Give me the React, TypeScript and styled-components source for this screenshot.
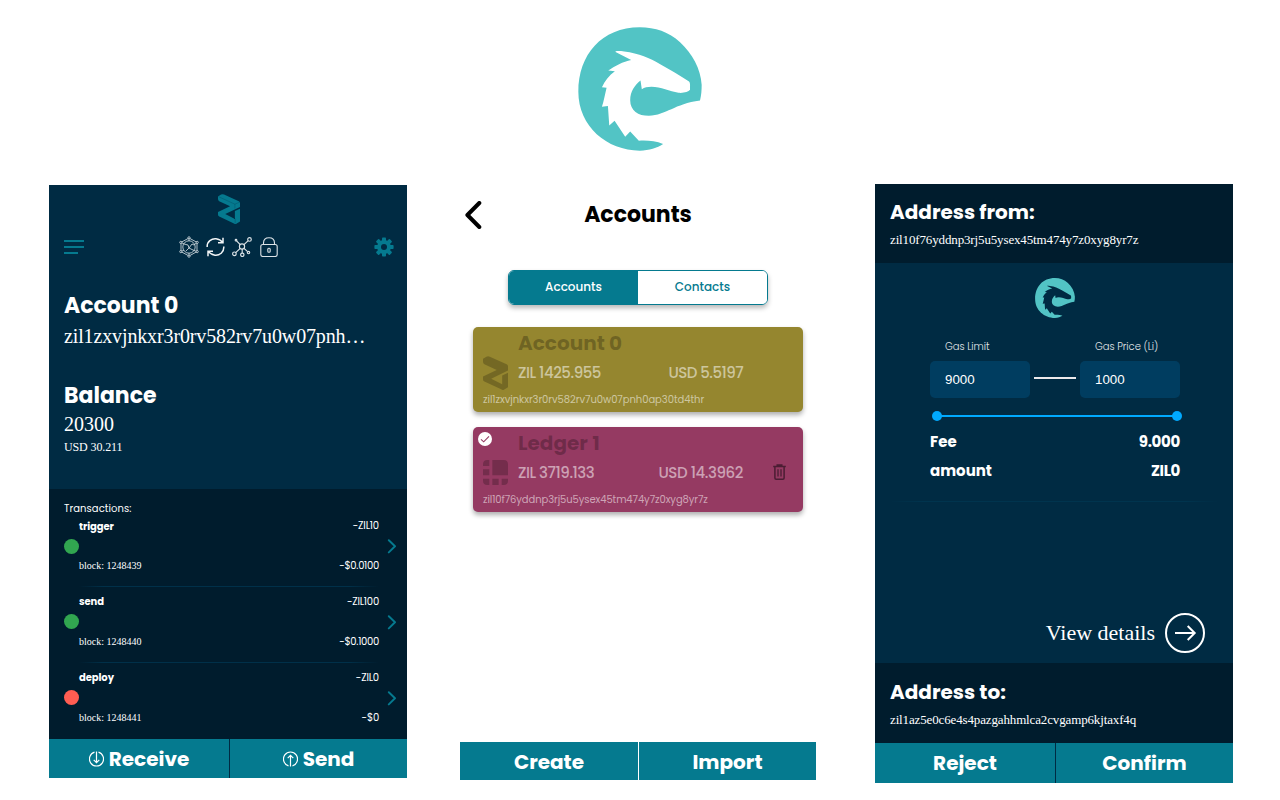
import React from 'react';
import styled, { createGlobalStyle, css } from 'styled-components';

const navy = '#002b43';
const deep = '#001c2d';
const teal = '#057a8f';

const GlobalStyle = createGlobalStyle`
  *, *::before, *::after { box-sizing: border-box; }
  body {
    margin: 0;
    background: #fff;
    overflow: hidden;
    font-family: Poppins, Inter, sans-serif;
  }
  h1, h2, p { margin: 0; font-weight: inherit; }
  svg { display: block; }
`;

const serif = css`font-family: "Liberation Serif", "Times New Roman", serif;`;

interface Tracked { $track?: number }
const tracking = css<Tracked>`letter-spacing: ${p => p.$track ?? 0}px;`;

/* Page */
const Page = styled.main`width: 1280px; height: 800px; overflow: hidden; white-space: nowrap;`;
const Hero = styled.header`
  display: flex; justify-content: center;
  height: 184px; padding-top: 27px;
`;
const Showcase = styled.div`display: flex; align-items: flex-start; padding-left: 49px;`;

/* Bottom action bar shared by the three screens */
const Actions = styled.div<{ $h: number; $gap: string; $first: number }>`
  display: grid;
  grid-template-columns: ${p => p.$first}px 1fr;
  column-gap: 1px;
  width: 100%; height: ${p => p.$h}px;
  background: ${p => p.$gap};
`;
const Action = styled.button<{ $drop?: number }>`
  display: flex; align-items: center; justify-content: center; gap: 5px;
  border: 0; padding: ${p => p.$drop ?? 0}px 0 0;
  background: ${teal};
  color: #fff;
  font: 700 20px/30px Poppins, Inter, sans-serif;
`;

/* Wallet */
const Wallet = styled.section`
  width: 358px; height: 593px; margin-top: 1px;
  background: ${navy}; color: #fff;
`;
const WalletTop = styled.div`height: 304px; padding: 9px 0 0 15px;`;
const Brand = styled.div`
  display: flex; justify-content: center;
  height: 43px; padding-right: 13px; color: ${teal};
`;
const Toolbar = styled.div`
  display: flex; justify-content: space-between; align-items: center;
  height: 20px; padding-right: 13px;
`;
const StatusIcons = styled.div`display: flex; align-items: center; gap: 7px; padding-right: 2px;`;
const WalletTitle = styled.h2<{ $top: number }>`
  margin-top: ${p => p.$top}px;
  font-size: 22px; line-height: 32px; font-weight: 700;
`;
const WalletAddress = styled.p`${serif} font-size: 20px; line-height: 28px; letter-spacing: -.13px;`;
const BalanceValue = styled.p`${serif} font-size: 20px; line-height: 24px;`;
const BalanceFiat = styled.p`${serif} font-size: 12px; line-height: 22px; letter-spacing: -.12px;`;

const History = styled.div`height: 250px; background: ${deep}; padding: 11px 11px 0 15px;`;
const HistoryTitle = styled.p`height: 16px; font-size: 10px; line-height: 18px; letter-spacing: .07px;`;
const Tx = styled.div`
  display: grid; grid-template-columns: 15px 300px 1fr; align-items: center;
  height: 60px;
`;
const Dot = styled.span<{ $c: string; $nudge: number }>`
  width: 15px; height: 15px; margin-top: ${p => p.$nudge}px;
  border-radius: 50%; background: ${p => p.$c};
`;
const TxBody = styled.div`display: flex; flex-direction: column; justify-content: space-between; height: 56px;`;
const TxLine = styled.div`display: flex; justify-content: space-between; height: 16px; font-size: 10px; line-height: 16px;`;
const TxName = styled.span<{ $lh: number }>`font-weight: 700; line-height: ${p => p.$lh}px; letter-spacing: -.08px;`;
const TxAmount = styled.span<Tracked>`${tracking}`;
const TxBlock = styled.span`${serif}`;
const TxArrow = styled.div`display: flex; justify-content: flex-end;`;
const TxRule = styled.div`
  width: 300px; height: 1px; margin: 10px 0 5px 15px;
  background: linear-gradient(90deg, transparent, #003049 8%, #003049 90%, transparent);
`;

/* Accounts */
const Accounts = styled.section`
  display: flex; flex-direction: column; align-items: center;
  width: 356px; height: 596px; margin-left: 53px;
`;
const AccountsHead = styled.div`
  display: grid; grid-template-columns: 60px 236px 60px; align-items: center;
  width: 356px; height: 62px;
`;
const BackButton = styled.div`padding-left: 5px;`;
const AccountsTitle = styled.h2`
  margin-top: -1px;
  color: #000; font-size: 22px; line-height: 32px; font-weight: 700; text-align: center;
`;
const Tabs = styled.div`
  display: grid; grid-template-columns: 129px 129px;
  width: 260px; height: 35px; margin-top: 24px;
  border: 1px solid ${teal}; border-radius: 6px;
  overflow: hidden;
  box-shadow: 0 3px 5px rgba(0, 0, 0, .28);
`;
const Tab = styled.div<{ $on?: boolean }>`
  background: ${p => (p.$on ? teal : '#fff')};
  color: ${p => (p.$on ? '#fff' : teal)};
  font-size: 12px; font-weight: 500; line-height: 31px; text-align: center;
`;
const Cards = styled.div`display: grid; gap: 15px; margin: 22px 0 auto;`;
const Card = styled.article<{ $c: string }>`
  position: relative;
  width: 330px; height: 85px; padding: 0 10px;
  border-radius: 5px;
  background: ${p => p.$c};
  box-shadow: 0 3px 5px rgba(0, 0, 0, .32);
`;
const CardGrid = styled.div`
  display: grid; grid-template-columns: 35px 225px 1fr; grid-template-rows: 31px 33px;
  height: 64px;
`;
const CardName = styled.h2`
  grid-column: 2 / 4;
  font-size: 20px; font-weight: 700; line-height: 33px;
  color: rgba(0, 0, 0, .26);
`;
const CardIcon = styled.div`grid-column: 1; align-self: center; margin-top: -4px; color: rgba(0, 0, 0, .22);`;
const CardMoney = styled.div`
  display: flex; justify-content: space-between;
  color: rgba(255, 255, 255, .53);
  font-size: 15px; font-weight: 500; line-height: 30px;
`;
const Money = styled.span<Tracked>`${tracking}`;
const CardTrash = styled.div`display: flex; justify-content: flex-end; padding: 6px 7px 0 0;`;
const CardAddress = styled.p<Tracked>`
  font-size: 10px; line-height: 17px; color: rgba(255, 255, 255, .55);
  ${tracking}
`;
const Selected = styled.span`position: absolute; left: 5px; top: 5px;`;

/* Confirm transaction */
const Confirm = styled.section`
  width: 358px; height: 599px; margin-left: 59px;
  background: ${navy}; color: #fff;
`;
const Party = styled.div<{ $h: number; $top: number }>`
  height: ${p => p.$h}px; padding: ${p => p.$top}px 15px 0;
  background: ${deep};
`;
const PartyTitle = styled.h2`font-size: 20px; line-height: 28px; font-weight: 700;`;
const PartyAddress = styled.p`${serif} font-size: 13px; line-height: 28px; letter-spacing: -.14px;`;
const Details = styled.div`height: 400px; padding-top: 15px;`;
const DetailsLogo = styled.div`display: flex; justify-content: center; padding-left: 2px;`;
const Gas = styled.div`
  display: grid; grid-template-columns: 100px 50px 100px; align-items: center; justify-items: center;
  width: 250px; margin: 20px 0 0 55px;
`;
const GasLabel = styled.span`
  justify-self: start; padding-left: 15px;
  font-size: 10px; font-weight: 300; line-height: 18px; height: 23px; color: #e4e8ea;
  letter-spacing: -.05px;
`;
const GasField = styled.div`
  width: 100px; height: 37px; padding-left: 15px;
  border-radius: 5px; background: #003d60;
  font: 13.33px/37px "Liberation Sans", Arial, sans-serif;
`;
const GasLink = styled.span`width: 42px; height: 2px; margin-top: -3px; background: #ece9ea;`;
const Slider = styled.div`
  display: flex; align-items: center; justify-content: space-between;
  width: 250px; height: 10px; margin: 13px 0 0 57px;
  background: linear-gradient(#00aaff, #00aaff) center / 240px 2px no-repeat;
`;
const Knob = styled.span`width: 10px; height: 10px; border-radius: 50%; background: #0af;`;
const Totals = styled.div`width: 250px; margin: 6px 0 0 55px;`;
const Total = styled.div`
  display: flex; justify-content: space-between;
  font-size: 15px; font-weight: 700; line-height: 29px;
`;
const TotalValue = styled.span`letter-spacing: -.3px;`;
const Rule = styled.div`
  height: 1px; margin: 16px 15px 0;
  background: linear-gradient(90deg, transparent, #00344e 10%, #00344e 90%, transparent);
`;
const ViewDetails = styled.div`
  ${serif}
  display: flex; align-items: center; justify-content: flex-end; gap: 10px;
  height: 40px; margin: 111px 28px 0 0;
  font-size: 22px;
`;

const Dragon = ({ size }: { size: number }) => (
  <svg width={size} height={size} viewBox="54 51 373 373" fill="#52c4c5">
    <path d="M421 272C425 257 426 242 426 225C423 176 398 132 361 97C327 66 286 52 240 52C125 52 55 135 55 246C55 350 141 423 240 423C268 422 292 415 310 403C287 393 262 392 237 393L211 365L196 381L164 333L148 347L144 289L126 291C132 273 135 254 140 234L126 232C134 214 148 196 165 184L145 182C164 168 190 155 214 150L167 126C164 122 182 123 193 125C238 130 270 146 300 162C330 178 360 197 388 215Q391 218 391 225V240C386 247 373 250 356 249C330 245 303 231 275 231C263 231 254 233 246 238L242 212C225 226 211 245 211 271C211 302 235 318 267 318C320 316 344 282 421 272Z" />
  </svg>
);

const Zil = ({ w, h, lines }: { w: number; h: number; lines?: boolean }) => (
  <svg width={w} height={h} viewBox="0 0 73 100" preserveAspectRatio="none" fill="currentColor">
    <path d="M10 2Q15-1 20 2L69 24Q73 26 73 30V43L24 67L56 83V57L73 49V92L61 99Q57 101 53 98L4 75Q0 73 0 69V60L40 41L4 24Q0 22 0 17V8Z" />
    {lines && <path d="M2 9L56 34L72 27M56 34V48M57 82V98" fill="none" stroke={navy} strokeOpacity=".4" strokeWidth="2" />}
  </svg>
);

const Menu = () => (
  <svg width="20" height="16" stroke={teal} strokeWidth="2">
    <path d="M0 2H20M0 8H20M0 14H14" />
  </svg>
);

const Gear = () => (
  <svg width="20" height="20" viewBox="-10 -10 20 20" fill={teal}>
    {[0, 45, 90, 135].map(a => <rect key={a} x="-2" y="-9.6" width="4" height="19.2" rx=".8" transform={`rotate(${a})`} />)}
    <circle r="6.9" />
    <circle r="3" fill={navy} />
  </svg>
);

const Hexagon = () => (
  <svg width="20" height="22" viewBox="0 0 20 22" fill="none" stroke="#dde4e8" strokeWidth=".8">
    <path d="M10 2L18 6.4V15.6L10 20L2 15.6V6.4Z" />
    <circle cx="10" cy="11" r="6.2" />
    <path d="M5 8L9 9L10 12L13 8L15 9M7 15L10 12L14 14M10 2V5M10 17V20M2 6.4L5 8M18 6.4L15 9M2 15.6L5 14M18 15.6L14 14" />
    <g fill={navy}>
      <circle cx="10" cy="1.8" r="1.1" /><circle cx="18.2" cy="6.4" r="1.1" /><circle cx="18.2" cy="15.6" r="1.1" />
      <circle cx="10" cy="20.2" r="1.1" /><circle cx="1.8" cy="15.6" r="1.1" /><circle cx="1.8" cy="6.4" r="1.1" />
    </g>
  </svg>
);

const Refresh = () => (
  <svg width="19" height="20" viewBox="0 0 19 20" fill="none" stroke="#f2f5f6" strokeWidth="1.5">
    <path d="M1.2 10C.8 4.2 5.8 1.4 10 1.8C13 2.1 15.2 3.6 16.8 5.6M17 .8V5.8H12M17.8 9.5C18.2 15.6 13.4 18.6 9 18.2C6 17.9 3.8 16.4 2.2 14.4M2 19.2V14.2H7" />
  </svg>
);

const Network = () => (
  <svg width="21" height="20" viewBox="0 0 21 20" fill="none" stroke="#dde4e8" strokeWidth="1.15">
    <circle cx="10" cy="9.5" r="2.6" /><circle cx="17.5" cy="2.4" r="1.8" /><circle cx="2.4" cy="16.8" r="1.8" />
    <circle cx="10.3" cy="17.8" r="1.7" /><circle cx="16.5" cy="15.5" r="1.2" /><circle cx="4" cy="3.2" r=".8" />
    <path d="M12 7.6L16.2 3.7M8.2 11.4L3.7 15.6M10.2 12.1V16.1M12 11.4L15.6 14.7M8.2 7.6L4.6 3.8" />
  </svg>
);

const Lock = () => (
  <svg width="18" height="20" viewBox="0 0 18 20" fill="none" stroke="#dde4e8" strokeWidth="1.1">
    <rect x=".8" y="7.5" width="16.4" height="12" rx="2" />
    <path d="M3.5 7.5V6C3.5 2.5 6 .7 9 .7S14.5 2.5 14.5 6V7.5" />
    <rect x="7.8" y="11.3" width="2.4" height="4" rx="1" />
  </svg>
);

const Chevron = () => (
  <svg width="9" height="15" fill="none" stroke={teal} strokeWidth="1.9" strokeLinecap="round" strokeLinejoin="round">
    <path d="M1.8 1.2L8 7.3L1.8 13.4" />
  </svg>
);

const CircleArrow = ({ up }: { up?: boolean }) => (
  <svg width="15" height="16" viewBox="0.5 0 15 16" fill="none" stroke="#fff" strokeWidth="1.2">
    {up
      ? <path d="M6 14.9A7 7.1 0 1 1 10 14.9M8 15.4V4.4M5.2 7.1L8 4.3L10.8 7.1" />
      : <path d="M6 1.1A7 7.1 0 1 0 10 1.1M8 .6V11.6M5.2 8.9L8 11.7L10.8 8.9" />}
  </svg>
);

const Back = () => (
  <svg width="17" height="29" fill="none" stroke="#000" strokeWidth="4" strokeLinecap="round" strokeLinejoin="round">
    <path d="M14.3 2L2.4 14L14.3 26" />
  </svg>
);

const Ledger = () => (
  <svg width="25" height="25" viewBox="0 0 75 75" fill="currentColor">
    <path d="M28 0H62Q75 0 75 13V46H28ZM0 28H19V46H0ZM28 56H47V75H28ZM19 0V18H0V13Q0 0 13 0ZM0 56H19V75H13Q0 75 0 62ZM56 56H75V62Q75 75 62 75H56Z" />
  </svg>
);

const Trash = () => (
  <svg width="13" height="17" viewBox="0 0 13 17" fill="none" stroke="#4b1d33" strokeWidth="1.5">
    <path d="M.2 2.5H12.8M4.2 2V.9H8.8V2M1.9 2.5V14Q1.9 15.2 3.1 15.2H9.9Q11.1 15.2 11.1 14V2.5" />
    <path d="M5 5.3V12.5M8 5.3V12.5" strokeWidth="1.3" />
  </svg>
);

const Check = () => (
  <svg width="14" height="14" viewBox="0 0 14 14">
    <circle cx="7" cy="7" r="7" fill="#fff" />
    <path d="M3 7.3L5.7 9.8L11 4.4" fill="none" stroke="#953a62" strokeWidth="1.1" />
  </svg>
);

const GoArrow = () => (
  <svg width="40" height="40" fill="none" stroke="#fff" strokeWidth="2">
    <circle cx="20" cy="20" r="19" />
    <path d="M10 20H29.5M22.7 13L29.7 20L22.7 27" />
  </svg>
);

const transactions = [
  { name: 'trigger', amount: '-ZIL10', at: -0.15, block: 'block: 1248439', fiat: '-$0.0100', ft: -0.3, color: '#31a650' },
  { name: 'send', amount: '-ZIL100', at: -0.2, block: 'block: 1248440', fiat: '-$0.1000', ft: -0.3, color: '#31a650' },
  { name: 'deploy', amount: '-ZIL0', at: -0.15, block: 'block: 1248441', fiat: '-$0', ft: -0.2, color: '#ff5d52' },
];

export default function App() {
  return (
    <Page>
      <GlobalStyle />
      <Hero><Dragon size={124} /></Hero>
      <Showcase>
        <Wallet>
          <WalletTop>
            <Brand><Zil w={22} h={30} lines /></Brand>
            <Toolbar>
              <Menu />
              <StatusIcons><Hexagon /><Refresh /><Network /><Lock /></StatusIcons>
              <Gear />
            </Toolbar>
            <WalletTitle $top={33}>Account 0</WalletTitle>
            <WalletAddress>zil1zxvjnkxr3r0rv582rv7u0w07pnh…</WalletAddress>
            <WalletTitle $top={30}>Balance</WalletTitle>
            <BalanceValue>20300</BalanceValue>
            <BalanceFiat>USD 30.211</BalanceFiat>
          </WalletTop>
          <History>
            <HistoryTitle>Transactions:</HistoryTitle>
            {transactions.map((t, i) => (
              <React.Fragment key={t.name}>
                {i > 0 && <TxRule />}
                <Tx>
                  <Dot $c={t.color} $nudge={i === 0 ? 1 : -1} />
                  <TxBody>
                    <TxLine><TxName $lh={i === 0 ? 18 : 16}>{t.name}</TxName><TxAmount $track={t.at}>{t.amount}</TxAmount></TxLine>
                    <TxLine><TxBlock>{t.block}</TxBlock><TxAmount $track={t.ft}>{t.fiat}</TxAmount></TxLine>
                  </TxBody>
                  <TxArrow><Chevron /></TxArrow>
                </Tx>
              </React.Fragment>
            ))}
          </History>
          <Actions $h={39} $gap={navy} $first={180}>
            <Action><CircleArrow />Receive</Action>
            <Action><CircleArrow up />Send</Action>
          </Actions>
        </Wallet>

        <Accounts>
          <AccountsHead>
            <BackButton><Back /></BackButton>
            <AccountsTitle>Accounts</AccountsTitle>
          </AccountsHead>
          <Tabs>
            <Tab $on>Accounts</Tab>
            <Tab>Contacts</Tab>
          </Tabs>
          <Cards>
            <Card $c="#95862f">
              <CardGrid>
                <CardName>Account 0</CardName>
                <CardIcon><Zil w={25} h={34} /></CardIcon>
                <CardMoney><Money $track={-0.45}>ZIL 1425.955</Money><Money $track={-0.54}>USD 5.5197</Money></CardMoney>
              </CardGrid>
              <CardAddress $track={-0.05}>zil1zxvjnkxr3r0rv582rv7u0w07pnh0ap30td4thr</CardAddress>
            </Card>
            <Card $c="#953a62">
              <Selected><Check /></Selected>
              <CardGrid>
                <CardName>Ledger 1</CardName>
                <CardIcon><Ledger /></CardIcon>
                <CardMoney><Money $track={-0.45}>ZIL 3719.133</Money><Money $track={-0.42}>USD 14.3962</Money></CardMoney>
                <CardTrash><Trash /></CardTrash>
              </CardGrid>
              <CardAddress $track={-0.09}>zil10f76yddnp3rj5u5ysex45tm474y7z0xyg8yr7z</CardAddress>
            </Card>
          </Cards>
          <Actions $h={38} $gap="#fff" $first={178}>
            <Action $drop={2}>Create</Action>
            <Action $drop={2}>Import</Action>
          </Actions>
        </Accounts>

        <Confirm>
          <Party $h={79} $top={14}>
            <PartyTitle>Address from:</PartyTitle>
            <PartyAddress>zil10f76yddnp3rj5u5ysex45tm474y7z0xyg8yr7z</PartyAddress>
          </Party>
          <Details>
            <DetailsLogo><Dragon size={40} /></DetailsLogo>
            <Gas>
              <GasLabel>Gas Limit</GasLabel><span /><GasLabel>Gas Price (Li)</GasLabel>
              <GasField>9000</GasField><GasLink /><GasField>1000</GasField>
            </Gas>
            <Slider><Knob /><Knob /></Slider>
            <Totals>
              <Total><span>Fee</span><TotalValue>9.000</TotalValue></Total>
              <Total><span>amount</span><TotalValue>ZIL0</TotalValue></Total>
            </Totals>
            <Rule />
            <ViewDetails>View details<GoArrow /></ViewDetails>
          </Details>
          <Party $h={80} $top={15}>
            <PartyTitle>Address to:</PartyTitle>
            <PartyAddress>zil1az5e0c6e4s4pazgahhmlca2cvgamp6kjtaxf4q</PartyAddress>
          </Party>
          <Actions $h={40} $gap={navy} $first={180}>
            <Action>Reject</Action>
            <Action>Confirm</Action>
          </Actions>
        </Confirm>
      </Showcase>
    </Page>
  );
}
